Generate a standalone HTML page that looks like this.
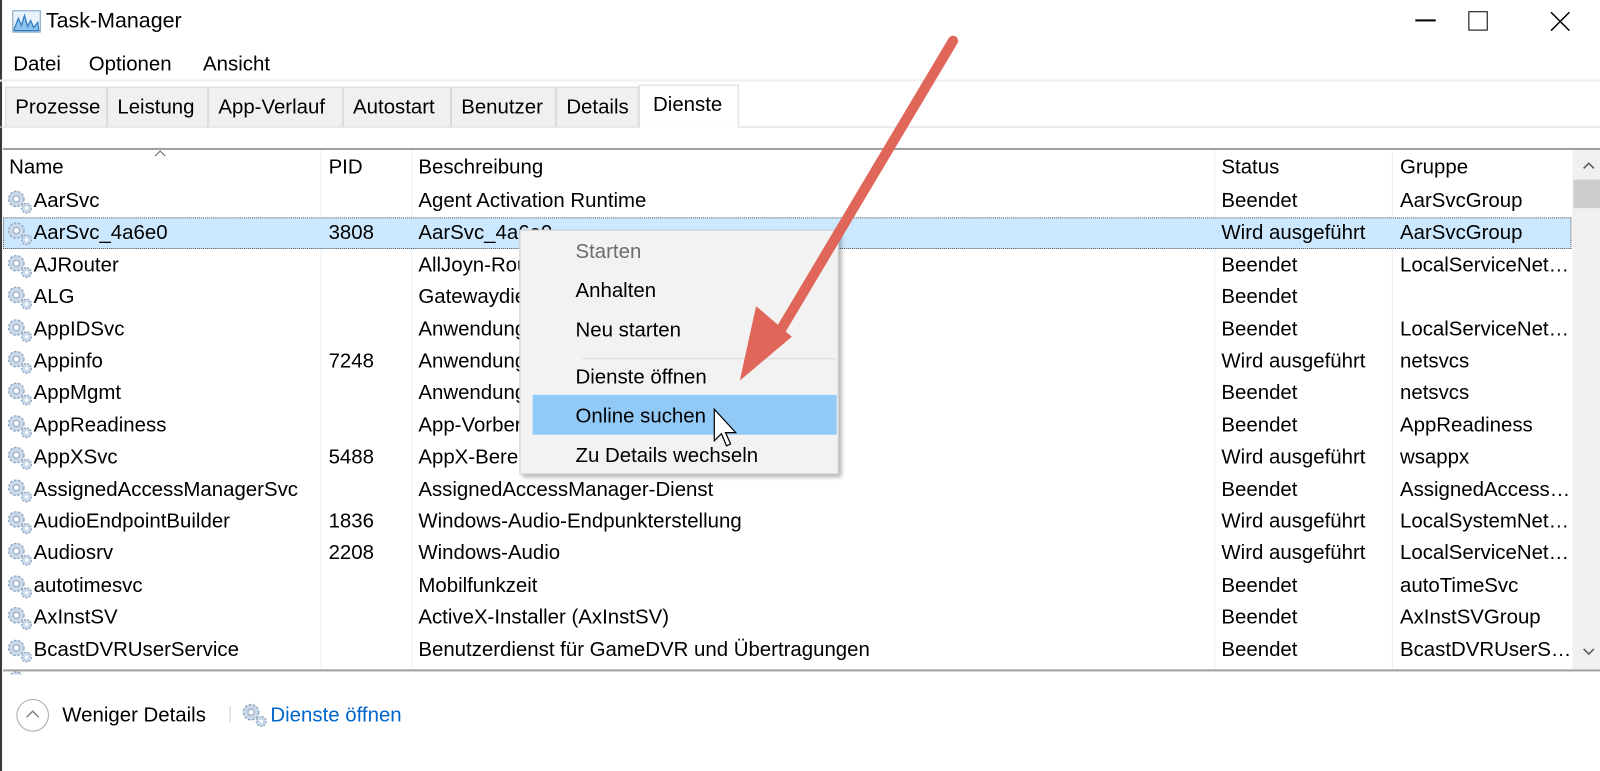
<!DOCTYPE html>
<html><head><meta charset="utf-8"><style>
*{margin:0;padding:0;box-sizing:border-box}
body{width:1600px;height:756px;background:#fff;overflow:hidden;margin:0}
#w{position:absolute;left:0;top:0;width:1568px;height:741px;transform:scale(1.0204);transform-origin:0 0;font-family:"Liberation Sans",sans-serif;font-size:20px;color:#000}
.a{position:absolute;white-space:nowrap}
.tab{position:absolute;top:85px;height:39px;background:#f0f0f0;border:1px solid #d9d9d9;border-bottom:none;padding:8px 0 0 9px}
.row{position:absolute;left:3px;width:1537px;height:31px}
.row span{position:absolute;top:4px;white-space:nowrap}
.g{position:absolute;left:3px;top:3px}
.mi{position:absolute;left:54px}
</style></head><body><div id="w">
<div class="a" style="left:0;top:0;width:2px;height:756px;background:#3a3a3a"></div>
<svg class="a" style="left:12px;top:10px" width="28" height="22" viewBox="0 0 28 22"><rect x="0.5" y="0.5" width="27" height="21" fill="#e8f2fb" stroke="#6a8fb5"/><path d="M2 18 L6 8 L9 15 L12 5 L15 16 L18 10 L21 17 L25 12 L26 20 L2 20Z" fill="#8ec3ee" stroke="#2e7bc4" stroke-width="1.2"/></svg>
<div class="a" style="left:45px;top:9px;font-size:21px">Task-Manager</div>
<div class="a" style="left:1387px;top:19px;width:20px;height:1.5px;background:#000"></div>
<div class="a" style="left:1439px;top:11px;width:19px;height:19px;border:1.5px solid #000"></div>
<svg class="a" style="left:1519px;top:11px" width="20" height="20"><path d="M1 1L19 19M19 1L1 19" stroke="#000" stroke-width="1.5"/></svg>
<div class="a" style="left:13px;top:52px">Datei</div>
<div class="a" style="left:87px;top:52px">Optionen</div>
<div class="a" style="left:199px;top:52px">Ansicht</div>
<div class="a" style="left:0;top:78px;width:1600px;height:2px;background:#f0f0f0"></div>
<div class="a" style="left:0;top:124px;width:1600px;height:1px;background:#d9d9d9"></div>
<div class="tab" style="left:5px;width:100px">Prozesse</div>
<div class="tab" style="left:105px;width:99px">Leistung</div>
<div class="tab" style="left:204px;width:132px">App-Verlauf</div>
<div class="tab" style="left:336px;width:106px">Autostart</div>
<div class="tab" style="left:442px;width:103px">Benutzer</div>
<div class="tab" style="left:545px;width:81px">Details</div>
<div class="tab" style="left:626px;width:98px;top:83px;height:42px;background:#fff;padding-top:8px;padding-left:13px">Dienste</div>
<div class="a" style="left:3px;top:145px;width:1597px;height:2px;background:#a0a0a0"></div>
<div class="a" style="left:3px;top:656px;width:1597px;height:2px;background:#a0a0a0"></div>
<div class="a" style="left:314px;top:147px;width:1px;height:509px;background:#eaeef3"></div>
<div class="a" style="left:403px;top:147px;width:1px;height:509px;background:#eaeef3"></div>
<div class="a" style="left:1190px;top:147px;width:1px;height:509px;background:#eaeef3"></div>
<div class="a" style="left:1364px;top:147px;width:1px;height:509px;background:#eaeef3"></div>
<svg class="a" style="left:151px;top:146px" width="12" height="8"><path d="M1 7L6 2L11 7" fill="none" stroke="#666"/></svg>
<div class="a" style="left:9px;top:153px">Name</div>
<div class="a" style="left:322px;top:153px">PID</div>
<div class="a" style="left:410px;top:153px">Beschreibung</div>
<div class="a" style="left:1197px;top:153px">Status</div>
<div class="a" style="left:1372px;top:153px">Gruppe</div>
<div class="a" style="left:1541px;top:147px;width:32px;height:509px;background:#f0f0f0"></div>
<div class="a" style="left:1542px;top:176px;width:30px;height:28px;background:#cdcdcd"></div>
<svg class="a" style="left:1550px;top:157px" width="14" height="10"><path d="M2 8L7 3L12 8" fill="none" stroke="#606060" stroke-width="1.6"/></svg>
<svg class="a" style="left:1550px;top:634px" width="14" height="10"><path d="M2 2L7 7L12 2" fill="none" stroke="#606060" stroke-width="1.6"/></svg>
<svg width="0" height="0" style="position:absolute"><defs><g id="gear"><circle cx="10" cy="10" r="7.5" fill="#c9d9ea" stroke="#8da4bd" stroke-width="1.3" stroke-dasharray="2.5 1.6"/><circle cx="10" cy="10" r="3" fill="#fff" stroke="#8da4bd"/><circle cx="20" cy="19" r="4.8" fill="#c9d9ea" stroke="#8da4bd" stroke-width="1.2" stroke-dasharray="2 1.3"/><circle cx="20" cy="19" r="1.6" fill="#fff"/></g></defs></svg>
<div id="rows"></div>
<div class="row" style="top:213px;background:#cce8ff;border:1px dotted #555"></div>
<script>
const d=[["AarSvc","","Agent Activation Runtime","Beendet","AarSvcGroup"],
["AarSvc_4a6e0","3808","AarSvc_4a6e0","Wird ausgeführt","AarSvcGroup"],
["AJRouter","","AllJoyn-Router","Beendet","LocalServiceNet…"],
["ALG","","Gatewaydienst","Beendet",""],
["AppIDSvc","","Anwendungsidentität","Beendet","LocalServiceNet…"],
["Appinfo","7248","Anwendungsinformationen","Wird ausgeführt","netsvcs"],
["AppMgmt","","Anwendungsverwaltung","Beendet","netsvcs"],
["AppReadiness","","App-Vorbereitung","Beendet","AppReadiness"],
["AppXSvc","5488","AppX-Bereitstellungsdienst","Wird ausgeführt","wsappx"],
["AssignedAccessManagerSvc","","AssignedAccessManager-Dienst","Beendet","AssignedAccess…"],
["AudioEndpointBuilder","1836","Windows-Audio-Endpunkterstellung","Wird ausgeführt","LocalSystemNet…"],
["Audiosrv","2208","Windows-Audio","Wird ausgeführt","LocalServiceNet…"],
["autotimesvc","","Mobilfunkzeit","Beendet","autoTimeSvc"],
["AxInstSV","","ActiveX-Installer (AxInstSV)","Beendet","AxInstSVGroup"],
["BcastDVRUserService","","Benutzerdienst für GameDVR und Übertragungen","Beendet","BcastDVRUserS…"]];
let h="";d.forEach((r,i)=>{const t=182+i*31.4;
h+=`<div class="row" style="top:${t}px;${i==1?'z-index:2':''}"><svg class="g" width="26" height="26"><use href="#gear"/></svg><span style="left:30px">${r[0]}</span><span style="left:319px">${r[1]}</span><span style="left:407px">${r[2]}</span><span style="left:1194px">${r[3]}</span><span style="left:1369px">${r[4]}</span></div>`});
h+=`<div class="row" style="top:${182+15*31.4}px;height:8px;overflow:hidden"><svg class="g" width="26" height="26"><use href="#gear"/></svg></div>`;
document.getElementById("rows").innerHTML=h;
</script>
<div class="a" style="left:509px;top:225px;width:313px;height:240px;background:#f2f2f2;border:1px solid #ccc;box-shadow:3px 3px 4px rgba(0,0,0,.3);z-index:5">
<div class="mi" style="top:10px;color:#6d6d6d">Starten</div>
<div class="mi" style="top:48px">Anhalten</div>
<div class="mi" style="top:87px">Neu starten</div>
<div class="a" style="left:61px;top:125px;width:248px;height:1px;background:#d7d7d7"></div>
<div class="a" style="left:12px;top:161px;width:298px;height:39px;background:#91c9f7"></div>
<div class="mi" style="top:133px">Dienste öffnen</div>
<div class="mi" style="top:171px">Online suchen</div>
<div class="mi" style="top:210px">Zu Details wechseln</div>
</div>
<svg class="a" style="left:688px;top:398px;z-index:7" width="40" height="50"><path d="M12 3 L12 34 L19 27 L24 39 L28 37 L23 26 L33 26 Z" fill="#fff" stroke="#000" stroke-width="1.2"/></svg>
<svg class="a" style="left:0;top:0;z-index:6" width="1600" height="756"><line x1="934" y1="40" x2="760" y2="332" stroke="#e0665a" stroke-width="10" stroke-linecap="round"/><polygon points="725,373 741,300 776,330" fill="#e0665a"/></svg>
<div class="a" style="left:16px;top:685px;width:32px;height:32px;border:1px solid #aaa;border-radius:50%"></div>
<svg class="a" style="left:24px;top:694px" width="16" height="12"><path d="M2 9L8 3L14 9" fill="none" stroke="#777" stroke-width="1.3"/></svg>
<div class="a" style="left:61px;top:690px">Weniger Details</div>
<div class="a" style="left:225px;top:692px;width:1px;height:16px;background:#ccc"></div>
<svg class="a" style="left:236px;top:688px" width="26" height="26"><use href="#gear"/></svg>
<div class="a" style="left:265px;top:690px;color:#0066cc">Dienste öffnen</div>
</div></body></html>
